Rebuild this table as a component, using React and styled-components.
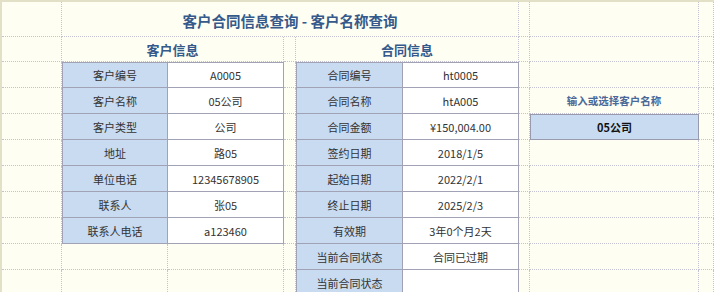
import React from 'react';
import styled, { createGlobalStyle } from 'styled-components';

const GlobalStyle = createGlobalStyle`
  html, body {
    margin: 0;
    padding: 0;
    background: #fefef3;
  }
`;

// 시트 전체 격자
const Sheet = styled.div`
  display: grid;
  grid-template-columns: 60px 106px 116px 12px 107px 116px 11px 169px 15px;
  grid-template-rows: 35px 25px repeat(9, 26px);
  border-left: 2px solid #e2e0c6;
  border-top: 2px solid #e2e0c6;
  background: #fefef3;
  font-family: 'Noto Sans CJK SC', 'Noto Sans', sans-serif;
  color: #2b2b2b;
  height: 292px;
  overflow: hidden;
`;

const Cell = styled.div`
  grid-column: span ${(p) => p.$span || 1};
  position: relative;
  box-sizing: border-box;
  display: flex;
  align-items: center;
  justify-content: center;
  border-right: 1px dotted #c2c2d2;
  border-bottom: 1px dotted #c2c2d2;
  font-size: 11px;
  white-space: nowrap;

  ${(p) =>
    p.$active &&
    `
    &::before {
      content: '';
      position: absolute;
      left: -2px;
      top: 0;
      bottom: 0;
      width: 2px;
      background: #1f7a4c;
    }
  `}
`;

const Title = styled(Cell)`
  font-size: 14.5px;
  font-weight: 700;
  color: #35598a;
  padding-top: 3px;
`;

const SectionHead = styled(Cell)`
  font-size: 13px;
  font-weight: 700;
  color: #35598a;
`;

// 표 칸
const TableCell = styled(Cell)`
  border-right: 1px solid #a2a2b6;
  border-bottom: 1px solid #a2a2b6;
  border-top: ${(p) => (p.$top ? '1px solid #a2a2b6' : 'none')};
  color: #333;
`;

const Label = styled(TableCell)`
  background: #c8dbf1;
  border-left: 1px solid #a2a2b6;
`;

const Value = styled(TableCell)`
  background: #ffffff;
`;

const Prompt = styled(Cell)`
  font-size: 10.5px;
  font-weight: 700;
  color: #4a6898;
`;

const InputBox = styled(Cell)`
  background: #c8dbf1;
  border: 1px solid #9a9aae;
  font-weight: 700;
  color: #111;
`;

const customer = [
  ['客户编号', 'A0005'],
  ['客户名称', '05公司'],
  ['客户类型', '公司'],
  ['地址', '路05'],
  ['单位电话', '12345678905'],
  ['联系人', '张05'],
  ['联系人电话', 'a123460'],
];

const contract = [
  ['合同编号', 'ht0005'],
  ['合同名称', 'htA005'],
  ['合同金额', '¥150,004.00'],
  ['签约日期', '2018/1/5'],
  ['起始日期', '2022/2/1'],
  ['终止日期', '2025/2/3'],
  ['有效期', '3年0个月2天'],
  ['当前合同状态', '合同已过期'],
  ['当前合同状态', ''],
];

const sidePanel = (i) => {
  if (i === 1) return <Prompt>输入或选择客户名称</Prompt>;
  if (i === 2) return <InputBox>05公司</InputBox>;
  return <Cell />;
};

const App = () => (
  <>
    <GlobalStyle />
    <Sheet>
      <Cell />
      <Title $span={5}>客户合同信息查询 - 客户名称查询</Title>
      <Cell />
      <Cell />
      <Cell />

      <Cell />
      <SectionHead $span={2}>客户信息</SectionHead>
      <Cell />
      <SectionHead $span={2}>合同信息</SectionHead>
      <Cell />
      <Cell />
      <Cell />

      {contract.map(([ck, cv], i) => {
        const cust = customer[i];
        return (
          <React.Fragment key={i}>
            <Cell $active={i === 5} />
            {cust ? (
              <>
                <Label $top={i === 0}>{cust[0]}</Label>
                <Value $top={i === 0}>{cust[1]}</Value>
              </>
            ) : (
              <>
                <Cell />
                <Cell />
              </>
            )}
            <Cell />
            <Label $top={i === 0}>{ck}</Label>
            <Value $top={i === 0}>{cv}</Value>
            <Cell />
            {sidePanel(i)}
            <Cell />
          </React.Fragment>
        );
      })}
    </Sheet>
  </>
);

export default App;
